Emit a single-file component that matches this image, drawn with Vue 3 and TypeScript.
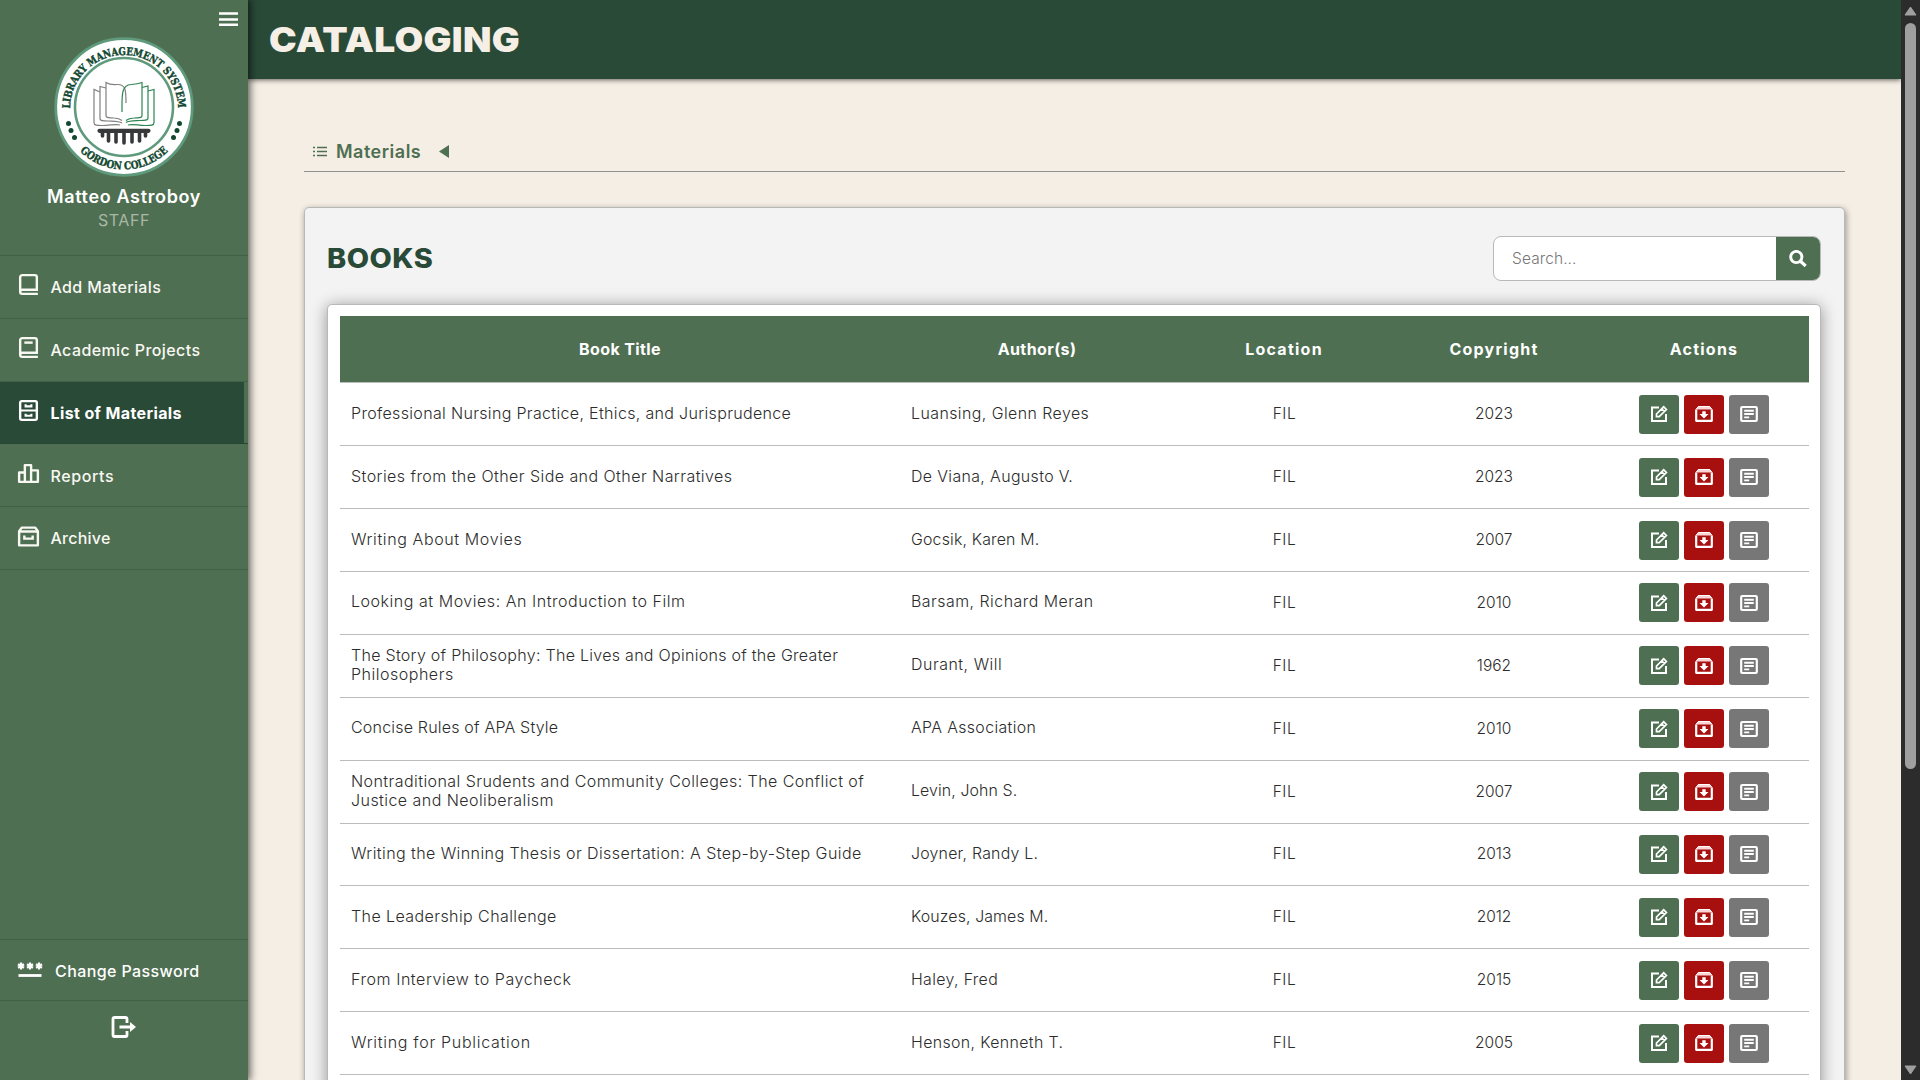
<script setup lang="ts">
interface NavItem {
  label: string
  icon: string
  active?: boolean
  spacing: number
}

interface Line {
  text: string
  spacing: number
}

interface Book {
  title: Line[]
  author: Line
  year: number
}

const navItems: NavItem[] = [
  { label: 'Add Materials', icon: 'book', spacing: 0.38 },
  { label: 'Academic Projects', icon: 'book-alt', spacing: 0.4 },
  { label: 'List of Materials', icon: 'cabinet', active: true, spacing: 0.38 },
  { label: 'Reports', icon: 'chart', spacing: 0.6 },
  { label: 'Archive', icon: 'archive', spacing: 0.25 },
]

const line = (text: string, spacing: number): Line => ({ text, spacing })

const books: Book[] = [
  { title: [line('Professional Nursing Practice, Ethics, and Jurisprudence', 0.32)], author: line('Luansing, Glenn Reyes', 0.45), year: 2023 },
  { title: [line('Stories from the Other Side and Other Narratives', 0.43)], author: line('De Viana, Augusto V.', 0.38), year: 2023 },
  { title: [line('Writing About Movies', 0.6)], author: line('Gocsik, Karen M.', 0.17), year: 2007 },
  { title: [line('Looking at Movies: An Introduction to Film', 0.52)], author: line('Barsam, Richard Meran', 0.5), year: 2010 },
  { title: [line('The Story of Philosophy: The Lives and Opinions of the Greater', 0.27), line('Philosophers', 0.5)], author: line('Durant, Will', 0.55), year: 1962 },
  { title: [line('Concise Rules of APA Style', 0.18)], author: line('APA Association', 0.37), year: 2010 },
  { title: [line('Nontraditional Srudents and Community Colleges: The Conflict of', 0.42), line('Justice and Neoliberalism', 0.43)], author: line('Levin, John S.', 0.1), year: 2007 },
  { title: [line('Writing the Winning Thesis or Dissertation: A Step-by-Step Guide', 0.41)], author: line('Joyner, Randy L.', 0.22), year: 2013 },
  { title: [line('The Leadership Challenge', 0.4)], author: line('Kouzes, James M.', 0.12), year: 2012 },
  { title: [line('From Interview to Paycheck', 0.55)], author: line('Haley, Fred', 0.35), year: 2015 },
  { title: [line('Writing for Publication', 0.7)], author: line('Henson, Kenneth T.', 0.37), year: 2005 },
]

const pillars = [
  { x: 102.5, h: 4 }, { x: 108.5, h: 9 }, { x: 116, h: 10 }, { x: 124, h: 11 },
  { x: 132, h: 10 }, { x: 139.5, h: 9 }, { x: 145.5, h: 4 },
]
</script>

<template>
  <div class="app">
    <aside class="sidebar">
      <div class="profile">
        <svg class="burger" width="19" height="14" viewBox="0 0 19 14"><path d="M0 1.500h19M0 7.500h19M0 12.800h19" stroke="#fff" stroke-width="2.500" /></svg>
        <svg class="logo" width="140" height="140" viewBox="54 37 140 140">
          <defs>
            <path id="arc-top" d="M70 109a54 54 0 0 1 108 0" />
            <path id="arc-bottom" d="M61.500 107a62.500 62.500 0 0 0 125 0" />
          </defs>
          <circle cx="124" cy="107" r="68.300" fill="#fff" stroke="#5f9a7c" stroke-width="2.800" />
          <circle cx="124" cy="107" r="49" fill="#fff" stroke="#5f9a7c" stroke-width="2.600" />
          <text class="seal"><textPath href="#arc-top" textLength="168" lengthAdjust="spacingAndGlyphs" startOffset="0.5">LIBRARY MANAGEMENT SYSTEM</textPath></text>
          <text class="seal"><textPath href="#arc-bottom" textLength="98" lengthAdjust="spacingAndGlyphs" startOffset="49">GORDON COLLEGE</textPath></text>
          <g fill="#11482f">
            <circle cx="68.500" cy="123.500" r="2.500" /><circle cx="71" cy="130.500" r="2.500" /><circle cx="74.500" cy="137.500" r="2.500" />
            <circle cx="179.500" cy="123.500" r="2.500" /><circle cx="177" cy="130.500" r="2.500" /><circle cx="173.500" cy="137.500" r="2.500" />
          </g>
          <g fill="none" stroke="#808080" stroke-width="1.200">
            <path d="M126 103c0-12 0-19-9-18.500-4 .3-7 .5-11-2v33c0 3 3 2 8 2.500 4 .3 6 1 8 2.500" />
            <path d="M106 88l-6-1.500v32c0 3 3 2 8 2.500 6 .3 11 0 14 2" />
            <path d="M100 92l-6-2.500v33c0 3 3 3 8 3 7 .2 14-2 18-.500" />
          </g>
          <g fill="none" stroke="#2c8452" stroke-width="1.200">
            <path d="M122 112c0-16-1-27 9-27.500 4-.3 7-.5 11-2v33c0 3-3 2-8 2.500-4 .3-6 1-8 2.500" />
            <path d="M142 87.500l6-1.500v32c0 3-3 2-8 2.500-6 .3-11 0-14 2" />
            <path d="M148 91l6-1.500v33c0 3-3 3-8 3-7 .2-14-2-18-.500" />
          </g>
          <path d="M99.500 130.800h49" stroke="#37383a" stroke-width="4.200" stroke-linecap="round" />
          <path v-for="p in pillars" :key="p.x" :d="`M${p.x} 132v${p.h}`" stroke="#37383a" stroke-width="3.600" stroke-linecap="round" />
        </svg>
        <div class="name">Matteo Astroboy</div>
        <div class="role">STAFF</div>
      </div>
      <nav class="nav">
        <a v-for="item in navItems" :key="item.label" class="nav-item" :class="{ active: item.active }">
          <svg class="nav-icon" width="25" height="25" viewBox="0 0 24 24" fill="none" stroke="currentColor" stroke-width="2.300">
            <path v-if="item.icon === 'book' || item.icon === 'book-alt'" d="M21 21H6a2 2 0 0 1-2-2V5a2 2 0 0 1 2-2h12a2 2 0 0 1 2 2v12H6a2 2 0 0 0-2 2" />
            <path v-if="item.icon === 'book-alt'" d="M8 7.300h8" />
            <template v-if="item.icon === 'cabinet'">
              <rect x="4" y="3" width="16" height="18" rx="1.500" /><path d="M4 12h16M9.200 6v2h5.600V6M9.200 15v2h5.600v-2" stroke-width="2" />
            </template>
            <path v-if="item.icon === 'chart'" stroke-linejoin="round" d="M3 20v-9h5.500v9zM8.500 20V4h6v16zM14.500 20V9H21v11z" />
            <template v-if="item.icon === 'archive'">
              <path stroke-linejoin="round" d="M3 7l2.500-3.500h13L21 7v13.500H3zM3 7.200h18" /><path d="M8 11v3h8v-3" />
            </template>
          </svg>
          <span class="nav-label" :style="{ letterSpacing: item.spacing + 'px' }">{{ item.label }}</span>
        </a>
      </nav>
      <div class="sidebar-foot">
        <a class="password">
          <svg width="26" height="16" viewBox="0 0 26 16" fill="none" stroke="#fff">
            <path d="M1.500 13.500h23" stroke-width="2.800" />
            <path stroke-width="2.200" d="M4 .6v6.800M1 2.200l6 3.600M1 5.800l6-3.600M13 .6v6.800M10 2.200l6 3.600M10 5.800l6-3.600M22 .6v6.800M19 2.200l6 3.600M19 5.800l6-3.600" />
          </svg>
          <span>Change Password</span>
        </a>
        <div class="logout">
          <svg width="26" height="22" viewBox="0 0 26 22">
            <path d="M16 7V3a1.500 1.500 0 0 0-1.500-1.500H3.500A1.500 1.500 0 0 0 2 3v16a1.500 1.500 0 0 0 1.500 1.500h11A1.500 1.500 0 0 0 16 19v-4M8.500 11h12" fill="none" stroke="#fff" stroke-width="2.800" />
            <path d="M19 6l6 5-6 5z" fill="#fff" />
          </svg>
        </div>
      </div>
    </aside>

    <div class="page">
      <header class="topbar"><h1>CATALOGING</h1></header>
      <main class="content">
        <div class="crumb">
          <svg width="14" height="11" viewBox="0 0 14 11"><path d="M0 1.500h2M0 5.500h2M0 9.500h2M4 1.500h10M4 5.500h10M4 9.500h10" stroke="#4f6f52" stroke-width="1.400" /></svg>
          <span>Materials</span>
          <svg class="caret" width="10" height="13" viewBox="0 0 10 13"><path d="M10 0v13L0 6.500z" fill="#4f6f52" /></svg>
        </div>
        <section class="card">
          <div class="card-head">
            <h2>BOOKS</h2>
            <div class="search">
              <span class="placeholder">Search...</span>
              <button>
                <svg width="18" height="17" viewBox="0 0 18 17" fill="none" stroke="#fff"><circle cx="7.300" cy="7" r="5.600" stroke-width="2.900" /><path d="M11.200 11l5.500 5" stroke-width="3.200" /></svg>
              </button>
            </div>
          </div>
          <div class="table-box">
            <div class="row head">
              <div>Book Title</div>
              <div class="head-author">Author(s)</div>
              <div class="wide">Location</div>
              <div class="wide">Copyright</div>
              <div class="wide">Actions</div>
            </div>
            <div v-for="book in books" :key="book.author.text" class="row">
              <div class="cell-text title">
                <div v-for="part in book.title" :key="part.text"><span :style="{ letterSpacing: part.spacing + 'px' }">{{ part.text }}</span></div>
              </div>
              <div class="cell-text"><span :style="{ letterSpacing: book.author.spacing + 'px' }">{{ book.author.text }}</span></div>
              <div class="cell-mid fil">FIL</div>
              <div class="cell-mid">{{ book.year }}</div>
              <div class="actions">
                <button class="edit">
                  <svg width="18" height="18" viewBox="0 0 18 18" fill="none" stroke="#fff" stroke-width="2"><path d="M9 2.500H2v13.500h14V9" /><path d="M6.500 11.700V9l7.200-7.200 2.700 2.700-7.200 7.200zM11.700 3.800l2.700 2.700" stroke-width="1.700" /></svg>
                </button>
                <button class="remove">
                  <svg width="18" height="18" viewBox="0 0 18 18" fill="none"><path d="M1 4.500L3.300 1.300h11.400L17 4.500z" fill="#fbd5d5" /><path d="M1.200 4.500v11.300h15.600V4.500" stroke="#fff" stroke-width="2.200" stroke-linejoin="round" /><path d="M1 4.300L3.300 1.500h11.400L17 4.300" stroke="#fff" stroke-width="1" /><path d="M7.300 6.300h3.400v2.700h2.800L9 13.500 4.500 9h2.800z" fill="#fff" /></svg>
                </button>
                <button class="detail">
                  <svg width="18" height="18" viewBox="0 0 18 18" fill="none" stroke="#fff" stroke-width="1.900"><rect x="1.200" y="2" width="15.600" height="14" rx="1" stroke-width="2.200" /><path d="M4.200 5.800h9.600M4.200 9h9.600M4.200 12.400h5" /></svg>
                </button>
              </div>
            </div>
          </div>
        </section>
      </main>
    </div>

    <div class="scrollbar">
      <svg width="13" height="10" viewBox="0 0 13 10"><path d="M6.500 1l5.500 8H1z" fill="#9f9f9f" stroke="#9f9f9f" stroke-linejoin="round" /></svg>
      <div class="thumb"></div>
      <svg class="down" width="13" height="10" viewBox="0 0 13 10"><path d="M6.500 9L1 1h11z" fill="#9f9f9f" stroke="#9f9f9f" stroke-linejoin="round" /></svg>
    </div>
  </div>
</template>

<style>
body { margin: 0; overflow: hidden; }
</style>

<style scoped>
* { box-sizing: border-box; }
.app {
  display: flex;
  width: 1920px;
  height: 1080px;
  overflow: hidden;
  background: #f5eee4;
  font-family: Inter, "Open Sans", sans-serif;
  color: #2a2a2a;
}
button { border: 0; padding: 0; display: flex; align-items: center; justify-content: center; }
.sidebar {
  position: relative;
  z-index: 2;
  display: flex;
  flex-direction: column;
  flex: none;
  width: 248px;
  background: #4f6f52;
  color: #fff;
  box-shadow: 1px 0 8px 1px rgba(0, 0, 0, 0.65);
}
.profile { position: relative; height: 255px; display: flex; flex-direction: column; align-items: center; padding-top: 37px; }
.burger { position: absolute; left: 219px; top: 12px; }
.logo { display: block; }
.seal { font: bold 10.800px "DejaVu Serif", serif; font-stretch: condensed; fill: #11482f; stroke: #11482f; stroke-width: 0.4px; }
.name { margin-top: 8px; font-size: 18px; line-height: 24px; font-weight: 600; letter-spacing: 0.65px; white-space: nowrap; }
.role { font-size: 16px; line-height: 22px; color: #a9b8a8; letter-spacing: 0.6px; }
.nav { border-top: 1px solid #416147; }
.nav-item { display: flex; align-items: center; height: 62.8px; padding-left: 16px; border-bottom: 1px solid #416147; font-size: 16px; font-weight: 500; color: #f8f8f3; }
.nav-icon { flex: none; margin-top: -4px; }
.nav-label { margin-left: 9.500px; margin-top: 0.8px; white-space: nowrap; }
.nav-item.active { background: linear-gradient(#2a4a38, #2a4a38) 0 0 / 244px 100% no-repeat; font-weight: 700; color: #fff; border-color: #274634; }
.sidebar-foot { margin-top: auto; height: 141px; border-top: 1px solid #416147; }
.password { display: flex; align-items: center; height: 61px; padding-left: 17px; border-bottom: 1px solid #416147; font-size: 16px; font-weight: 500; letter-spacing: 0.4px; }
.password svg { margin-right: 12px; }
.password span { margin-top: 2px; }
.logout { display: flex; justify-content: center; padding-top: 15px; }
.page { flex: 1; min-width: 0; display: flex; flex-direction: column; }
.topbar { position: relative; flex: none; height: 79px; display: flex; align-items: center; padding-left: 21px; background: #2a4a38; box-shadow: 0 1px 5px rgba(0, 0, 0, 0.6); }
h1 { margin: 0; font-size: 34px; font-weight: 900; color: #f5efe6; letter-spacing: 0.300px; transform: scaleX(1.09); transform-origin: left; }
.content { padding: 51px 56px 0; flex: 1; min-height: 0; }
.crumb { display: flex; align-items: center; height: 42px; padding: 2px 0 0 9px; border-bottom: 1px solid #8f9290; color: #4f6f52; font-size: 18px; font-weight: 600; letter-spacing: 0.5px; }
.crumb span { margin-left: 9px; }
.caret { margin-left: 18px; }
.card { margin-top: 35px; height: 1000px; border: 1px solid #b9b9b9; border-radius: 5px; background: #f3f3f3; padding: 28px 23px 28px 22px; box-shadow: 1px 2px 6px rgba(0, 0, 0, 0.4); }
.card-head { display: flex; justify-content: space-between; height: 45px; }
h2 { margin: 0; line-height: 45px; font-size: 26.500px; font-weight: 800; color: #2a4a38; letter-spacing: 0.4px; transform: scaleX(1.09); transform-origin: left; }
.search { display: flex; width: 328px; height: 45px; border: 1px solid #b9b9b9; border-radius: 8px; overflow: hidden; background: #fff; }
.placeholder { flex: 1; padding-left: 18px; line-height: 43px; font-size: 15.500px; font-weight: 350; color: #777; letter-spacing: 0.1px; }
.search button { width: 44px; background: #4f6f52; }
.table-box { margin-top: 23px; height: 900px; border: 1px solid #b9b9b9; border-radius: 5px; background: #fff; padding: 11px 11px 0 12px; box-shadow: 0 2px 16px rgba(0, 0, 0, 0.4); }
.row { display: grid; grid-template-columns: 560px 279px 210px 210px 210px; align-items: center; height: 62.880px; border-bottom: 1px solid #bcbcbc; font-size: 15.900px; font-weight: 350; line-height: 19px; color: #2c2c2c; }
.row.head { height: 67.400px; background: #4f6f52; color: #fff; font-size: 16px; font-weight: 650; letter-spacing: 0.4px; text-align: center; }
.head-author { padding-right: 5px; }
.wide { letter-spacing: 1.250px; }
.cell-text { padding: 0 0 2px 11px; white-space: nowrap; }
.title { font-size: 16.050px; }
.cell-mid { padding-bottom: 1px; text-align: center; font-size: 15.500px; }
.fil { letter-spacing: 0.6px; padding-left: 1px; }
.actions { display: flex; justify-content: center; gap: 5px; }
.actions button { width: 40px; height: 39px; border-radius: 3px; }
.edit { background: #4f6f52; }
.remove { background: #a80f0f; }
.detail { background: #777; }
.scrollbar { flex: none; width: 19px; background: #2c2c2c; display: flex; flex-direction: column; align-items: center; padding: 6px 1px 5px 0; position: relative; z-index: 3; }
.thumb { margin-top: 7px; width: 11px; height: 746px; border-radius: 6px; background: #9f9f9f; }
.down { margin-top: auto; }
</style>
